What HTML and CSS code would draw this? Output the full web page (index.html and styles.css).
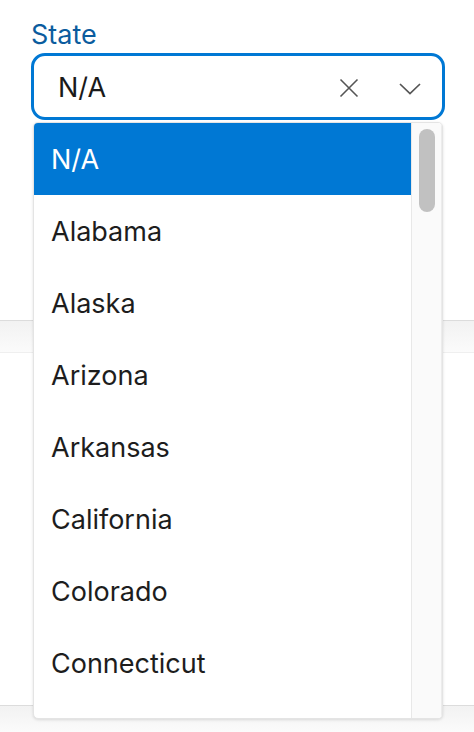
FILE: index.html
```html
<!DOCTYPE html>
<html lang="en">
<head>
<meta charset="utf-8">
<title>State</title>
<link rel="stylesheet" href="styles.css">
</head>
<body>
<div class="page">
  <section class="card card-top">
    <div class="field">
      <label class="label">State</label>
      <div class="select">
        <span class="value">N/A</span>
        <span class="icons">
          <svg class="icon-clear" width="20" height="20" viewBox="0 0 20 20"><path d="M1.5 1.5 L18.5 18.5 M18.5 1.5 L1.5 18.5" stroke="#555" stroke-width="1.6" fill="none"/></svg>
          <svg class="icon-chevron" width="24" height="14" viewBox="0 0 24 14"><path d="M2 2 L12 11.5 L22 2" stroke="#555" stroke-width="1.7" fill="none"/></svg>
        </span>
      </div>
    </div>
  </section>
  <div class="gap"></div>
  <section class="card card-bottom"></section>
  <div class="gap gap-end"></div>

  <div class="dropdown">
    <ul class="options">
      <li class="option selected">N/A</li>
      <li class="option">Alabama</li>
      <li class="option">Alaska</li>
      <li class="option">Arizona</li>
      <li class="option">Arkansas</li>
      <li class="option">California</li>
      <li class="option">Colorado</li>
      <li class="option">Connecticut</li>
    </ul>
    <div class="scrollbar"><div class="thumb"></div></div>
  </div>
</div>
</body>
</html>
```

FILE: styles.css
```css
* { box-sizing: border-box; }
html, body { margin: 0; padding: 0; background: #fff; }
body {
  font-family: Inter, "Noto Sans", "Liberation Sans", sans-serif;
  color: #1d1d1d;
  width: 474px;
  height: 732px;
  overflow: hidden;
}
.page { position: relative; height: 732px; }
.card { background: #fff; }
.card-top { height: 321px; border-bottom: 1px solid #dcdcdc; }
.card-bottom { height: 354px; border-top: 1px solid #efefef; border-bottom: 1px solid #dcdcdc; }
.gap { height: 31px; background: linear-gradient(#f2f2f2, #fbfbfb); }
.gap-end { height: 26px; }
.field { padding: 18px 0 0 31px; display: flex; flex-direction: column; }
.label {
  font-size: 27px;
  line-height: 33px;
  color: #0b5c9e;
  height: 35px;
}
.select {
  width: 414px;
  height: 67px;
  border: 3px solid #0078d4;
  border-radius: 14px;
  display: flex;
  align-items: center;
  padding: 0 20px 0 24px;
}
.value { flex: 1; font-size: 27px; line-height: 33px; color: #1a1a1a; padding-top: 1px; }
.icons { display: flex; align-items: center; gap: 39px; padding-top: 2px; }
.icon-chevron { margin-top: 2px; }
.dropdown {
  position: absolute;
  top: 122px;
  left: 33px;
  width: 410px;
  height: 597px;
  background: #fff;
  border: 1px solid #e4e4e4;
  border-radius: 5px;
  box-shadow: 0 1px 3px rgba(0,0,0,0.12);
  overflow: hidden;
  display: grid;
  grid-template-columns: 1fr 31px;
  align-items: start;
}
.options { list-style: none; margin: 0; padding: 0; }
.option {
  height: 72px;
  display: flex;
  align-items: center;
  padding-left: 17px;
  font-size: 27px;
  color: #1d1d1d;
}
.option.selected { background: #0078d4; color: #fff; }
.scrollbar {
  height: 100%;
  background: #fafafa;
  border-left: 1px solid #e8e8e8;
  border-right: 1px solid #ececec;
  padding: 6px 0 0 7px;
}
.thumb {
  width: 16px;
  height: 83px;
  background: #c1c1c1;
  border-radius: 8px;
}
```
